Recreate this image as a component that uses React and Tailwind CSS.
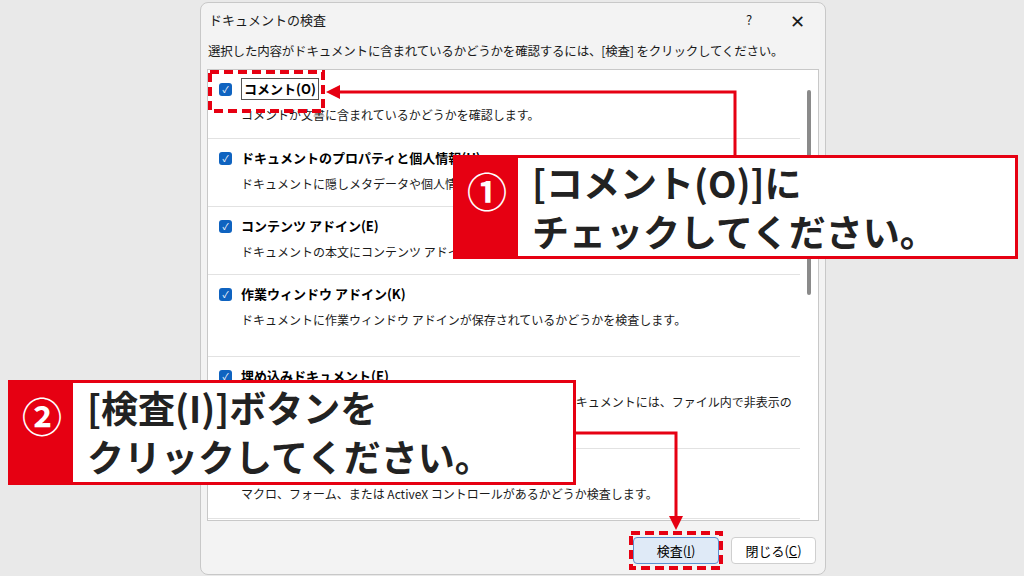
export default function App() {
  const rows = [
    { t: "コメント(O)", d: ["コメントが文書に含まれているかどうかを確認します。"], h: 69, first: true },
    { t: "ドキュメントのプロパティと個人情報(U)", d: ["ドキュメントに隠しメタデータや個人情報が保存されていないかどうかを検査します。"], h: 68 },
    { t: "コンテンツ アドイン(E)", d: ["ドキュメントの本文にコンテンツ アドインが保存されていないかどうかを検査します。"], h: 68 },
    { t: "作業ウィンドウ アドイン(K)", d: ["ドキュメントに作業ウィンドウ アドインが保存されているかどうかを検査します。"], h: 82 },
    { t: "埋め込みドキュメント(E)", d: ["埋め込みドキュメントがあるかどうか検査します。埋め込みドキュメントには、ファイル内で非表示の情", "報が含まれる可能性があります。"], h: 92 },
    { t: "マクロ、フォーム、ActiveX コントロール(S)", d: ["マクロ、フォーム、または ActiveX コントロールがあるかどうか検査します。"], h: 70 },
  ];
  const f = { fontFamily: '"Noto Sans CJK JP", "Noto Sans", sans-serif' };
  return (
    <div className="relative w-[1024px] h-[576px] overflow-hidden bg-[#e9e9e9]" style={f}>
      <div className="absolute left-[200px] top-[2px] w-[626px] h-[573px] bg-[#f3f3f3] border border-[#c8c8c8] rounded-lg flex flex-col">
        <div className="flex items-center h-[34px] pl-[8px] text-[13px] text-[#1a1a1a]">
          <span className="flex-1">ドキュメントの検査</span>
          <span className="w-[40px] text-center">?</span>
          <span className="w-[56px] text-center text-[18px] font-light">✕</span>
        </div>
        <div className="px-[7px] pt-[5px] h-[32px] text-[12.5px] text-[#1a1a1a] tracking-[-0.2px]">選択した内容がドキュメントに含まれているかどうかを確認するには、[検査] をクリックしてください。</div>
        <div className="mx-[6px] h-[452px] bg-white border border-[#c8c8c8] flex">
          <div className="flex-1 flex flex-col overflow-hidden">
            {rows.map((r, i) => (
              <div key={i} className="border-b border-[#e2e2e2] pt-[10px] shrink-0" style={{ height: r.h }}>
                <div className="flex items-center h-[18px] pl-[11px] gap-[9px]">
                  <span className="w-[13px] h-[13px] rounded-[3px] bg-[#0f63c0] text-white text-[9px] leading-[13px] text-center">✓</span>
                  <span className={`text-[13px] font-bold text-black ${r.first ? "border border-[#555] px-[2px]" : ""}`}>{r.t}</span>
                </div>
                <div className="pl-[33px] pt-[8px] text-[12px] leading-[18px] text-[#1a1a1a]">
                  {r.d.map((l, j) => <div key={j}>{l}</div>)}
                </div>
              </div>
            ))}
          </div>
          <div className="w-[18px] flex justify-center pt-[20px]">
            <div className="w-[4px] h-[205px] rounded bg-[#8a8a8a]"></div>
          </div>
        </div>
        <div className="flex justify-end gap-[12px] pr-[9px] pt-[16px] text-[13px]">
          <div className="w-[86px] h-[27px] flex items-center justify-center bg-[#dfeaf7] border border-[#5a8fd0] rounded">検査(<u>I</u>)</div>
          <div className="w-[85px] h-[27px] flex items-center justify-center bg-white border border-[#cfcfcf] rounded">閉じる(<u>C</u>)</div>
        </div>
      </div>

      <svg className="absolute left-0 top-0" width="1024" height="576">
        <rect x="210" y="72" width="113" height="39" fill="none" stroke="#e60012" strokeWidth="4" strokeDasharray="9 5" />
        <rect x="631" y="533" width="90" height="35" fill="none" stroke="#e60012" strokeWidth="4" strokeDasharray="9 5" />
        <polyline points="735,155 735,92 336,92" fill="none" stroke="#e60012" strokeWidth="3" />
        <polygon points="326,92 340,85 340,99" fill="#e60012" />
        <polyline points="575,433 676,433 676,520" fill="none" stroke="#e60012" strokeWidth="3" />
        <polygon points="676,530 669,516 683,516" fill="#e60012" />
      </svg>

      <div className="absolute left-[453px] top-[155px] w-[565px] h-[104px] bg-white border-[3px] border-[#e60012] flex">
        <div className="w-[62px] bg-[#e60012] text-white text-[40px] font-bold flex justify-center pt-[2px]">①</div>
        <div className="pl-[14px] text-[37px] leading-[49px] font-bold text-[#222]">
          <div>[コメント(O)]に</div>
          <div>チェックしてください。</div>
        </div>
      </div>
      <div className="absolute left-[8px] top-[380px] w-[568px] h-[105px] bg-white border-[3px] border-[#e60012] flex">
        <div className="w-[62px] bg-[#e60012] text-white text-[40px] font-bold flex justify-center pt-[2px]">②</div>
        <div className="pl-[14px] text-[37px] leading-[49px] font-bold text-[#222]">
          <div>[検査(I)]ボタンを</div>
          <div>クリックしてください。</div>
        </div>
      </div>
    </div>
  );
}
